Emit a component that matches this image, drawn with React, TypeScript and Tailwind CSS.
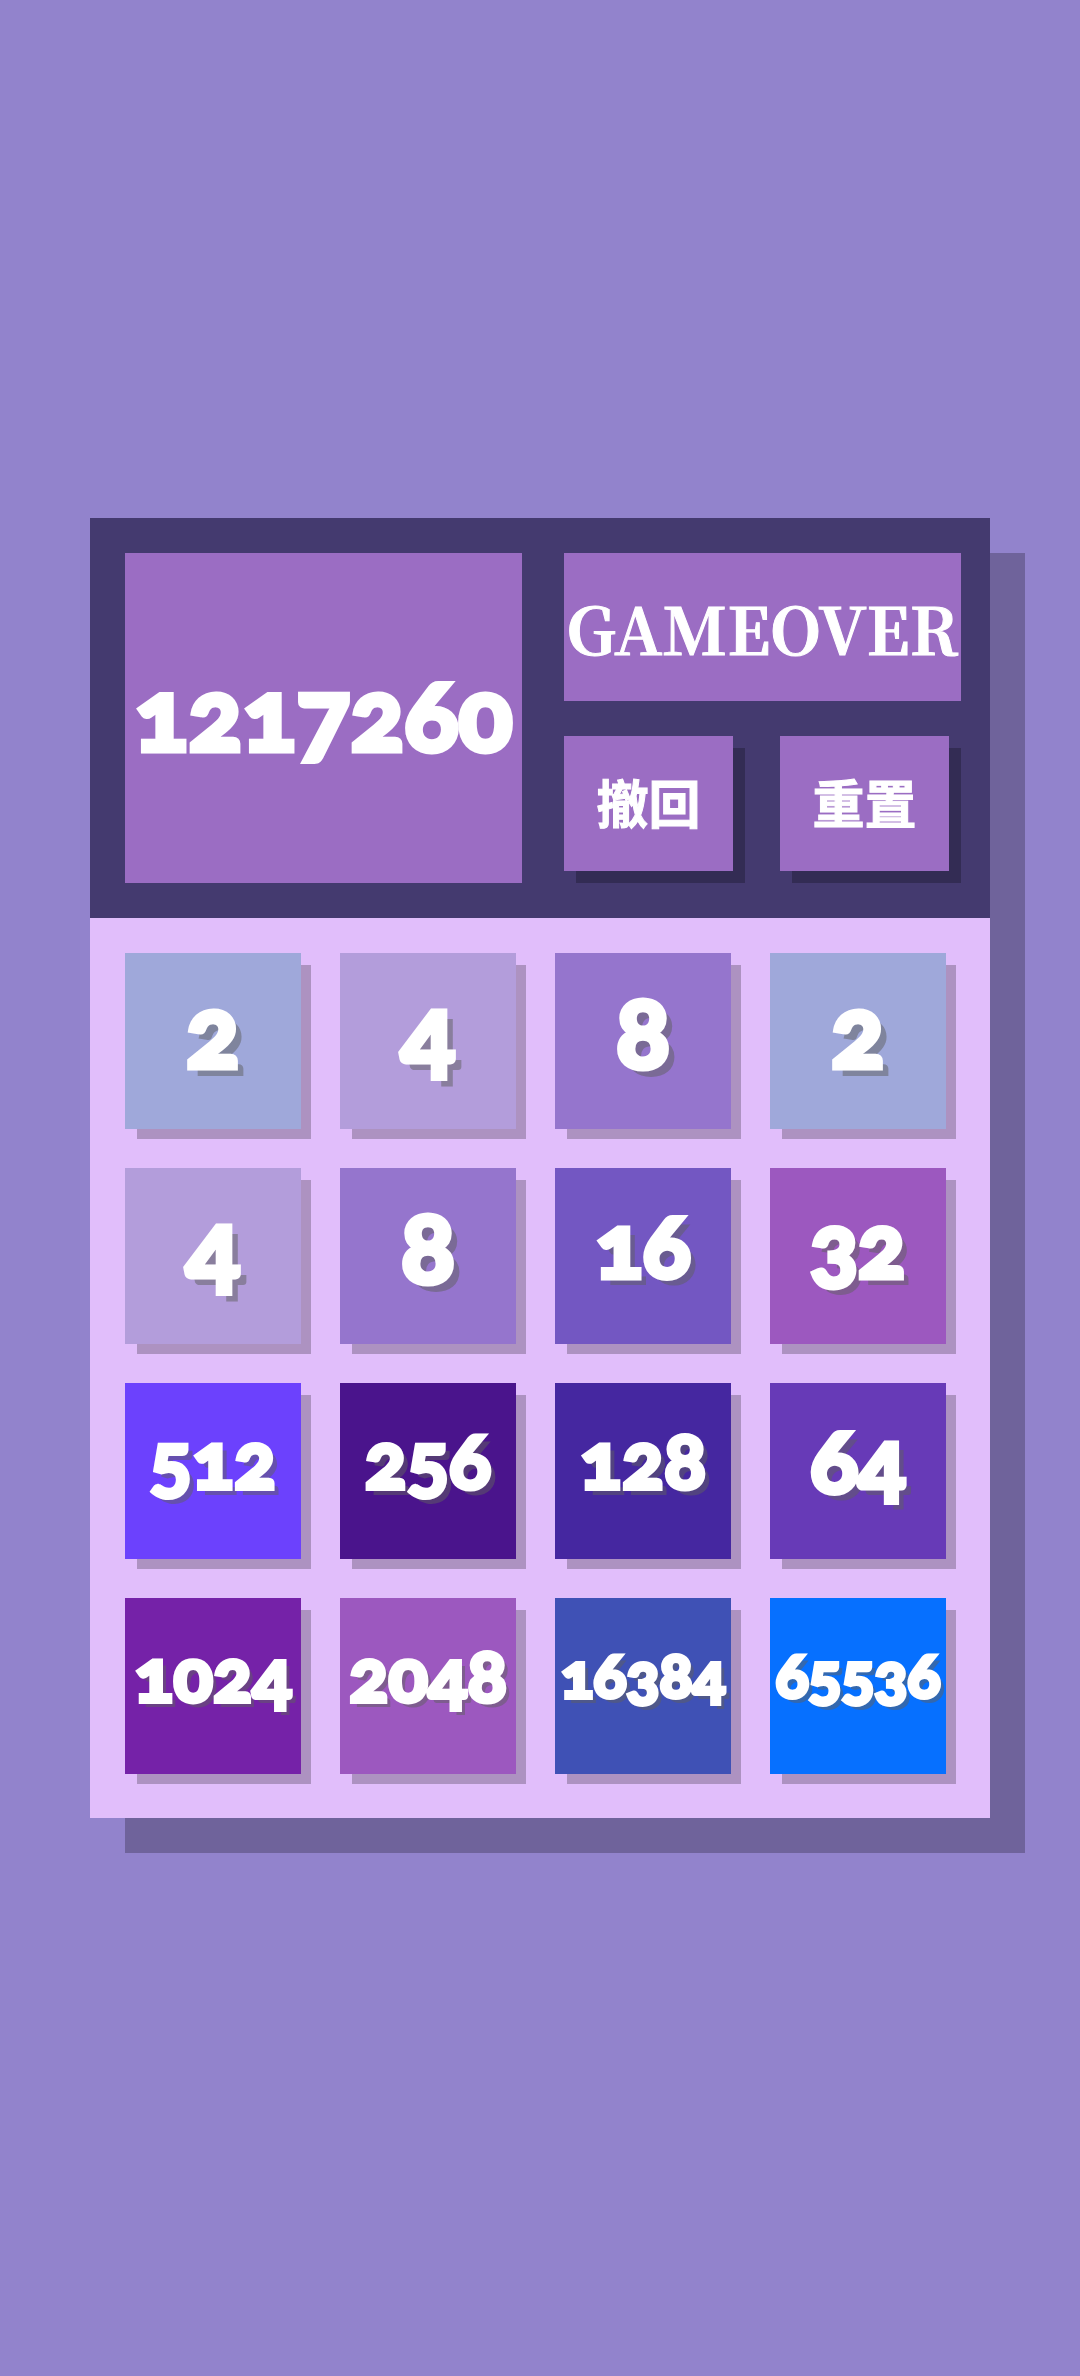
import React, { useState } from 'react';
import clsx from 'clsx';

const tileColors: Record<number, string> = {
  2: 'bg-[#9fa8da]',
  4: 'bg-[#b39ddb]',
  8: 'bg-[#9575cd]',
  16: 'bg-[#7357c2]',
  32: 'bg-[#9c58bf]',
  64: 'bg-[#673ab7]',
  128: 'bg-[#4527a0]',
  256: 'bg-[#4a148c]',
  512: 'bg-[#6c41fd]',
  1024: 'bg-[#7522a8]',
  2048: 'bg-[#9c58bf]',
  16384: 'bg-[#3f51b5]',
  65536: 'bg-[#0670ff]'
};

// Longer numbers get a smaller face, indexed by digit count
const digitSizes = [
  '',
  'text-[100px] [-webkit-text-stroke:5px_white] [text-shadow:8px_8px_0_rgba(96,96,96,0.5)]',
  'text-[88px] [-webkit-text-stroke:5px_white] [text-shadow:7px_7px_0_rgba(96,96,96,0.5)]',
  'text-[78px] [-webkit-text-stroke:4px_white] [text-shadow:6px_6px_0_rgba(96,96,96,0.5)]',
  'text-[73px] [-webkit-text-stroke:4px_white] [text-shadow:5px_5px_0_rgba(96,96,96,0.5)]',
  'text-[61px] [-webkit-text-stroke:4px_white] [text-shadow:5px_5px_0_rgba(96,96,96,0.5)]'
];

const initialBoard = [
  2, 4, 8, 2,
  4, 8, 16, 32,
  512, 256, 128, 64,
  1024, 2048, 16384, 65536
];

const Tile: React.FC<{ value: number }> = ({ value }) => (
  <div
    className={clsx(
      'aspect-square flex items-center justify-center pb-6 leading-none shadow-[11px_11px_0_-1px_rgba(0,0,0,0.23)]',
      tileColors[value],
      digitSizes[String(value).length]
    )}
  >
    {value}
  </div>
);

const ActionButton: React.FC<{ label: string; onClick: () => void }> = ({ label, onClick }) => (
  <button
    type="button"
    onClick={onClick}
    className="flex-1 h-[135px] pb-1 bg-[#9b6dc3] text-white text-[52px] leading-none font-bold [-webkit-text-stroke:1px_white] font-['Noto_Sans_CJK_SC',sans-serif] shadow-[12px_12px_0_rgba(0,0,0,0.24)]"
  >
    {label}
  </button>
);

const App: React.FC = () => {
  const [board, setBoard] = useState(initialBoard);
  const [score, setScore] = useState(1217260);

  const restore = () => {
    setBoard(initialBoard);
    setScore(1217260);
  };

  return (
    <main className="min-h-screen flex items-center bg-[#9283cc] px-[90px] pb-10 text-white font-black font-['Lato','Open_Sans',sans-serif] oldstyle-nums">
      <div className="w-full shadow-[35px_35px_0_rgba(0,0,0,0.24)]">
        {/* Score and controls */}
        <header className="grid grid-cols-2 gap-[42px] bg-[#443a6f] py-[35px] pl-[35px] pr-[29px]">
          <div className="flex items-center justify-center bg-[#9b6dc3] h-[330px] pb-3 text-[100px] leading-none [-webkit-text-stroke:5px_white]">
            {score}
          </div>
          <div className="flex flex-col gap-[35px]">
            <div className="flex items-center justify-center h-[148px] bg-[#9b6dc3] text-[65px] leading-none font-bold [-webkit-text-stroke:1px_white] font-['Noto_Serif_CJK_SC','Liberation_Serif',serif]">
              GAMEOVER
            </div>
            <div className="flex gap-[47px] pr-3">
              <ActionButton label="撤回" onClick={restore} />
              <ActionButton label="重置" onClick={restore} />
            </div>
          </div>
        </header>

        {/* Board */}
        <section className="grid grid-cols-4 gap-[39px] bg-[#e1befb] pt-[35px] pl-[35px] pr-[44px] pb-[44px]">
          {board.map((value, index) => (
            <Tile key={index} value={value} />
          ))}
        </section>
      </div>
    </main>
  );
};

export default App;
